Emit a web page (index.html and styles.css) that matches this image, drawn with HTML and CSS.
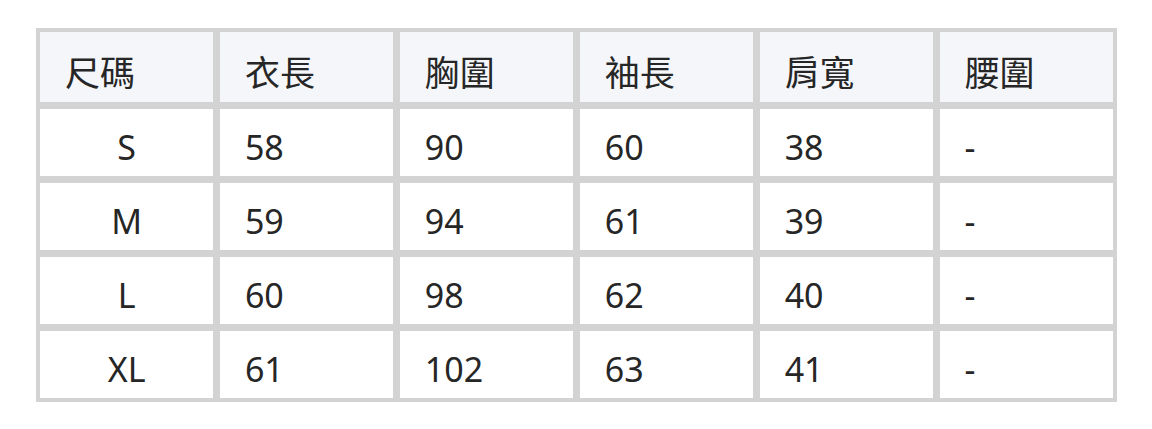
FILE: index.html
```html
<!DOCTYPE html>
<html lang="zh-Hant">
<head>
<meta charset="utf-8">
<title>尺碼表</title>
<link rel="stylesheet" href="styles.css">
</head>
<body>
<div class="size-table">
  <div class="cell head">尺碼</div>
  <div class="cell head">衣長</div>
  <div class="cell head">胸圍</div>
  <div class="cell head">袖長</div>
  <div class="cell head">肩寬</div>
  <div class="cell head">腰圍</div>

  <div class="cell size">S</div>
  <div class="cell">58</div>
  <div class="cell">90</div>
  <div class="cell">60</div>
  <div class="cell">38</div>
  <div class="cell">-</div>

  <div class="cell size">M</div>
  <div class="cell">59</div>
  <div class="cell">94</div>
  <div class="cell">61</div>
  <div class="cell">39</div>
  <div class="cell">-</div>

  <div class="cell size">L</div>
  <div class="cell">60</div>
  <div class="cell">98</div>
  <div class="cell">62</div>
  <div class="cell">40</div>
  <div class="cell">-</div>

  <div class="cell size">XL</div>
  <div class="cell">61</div>
  <div class="cell">102</div>
  <div class="cell">63</div>
  <div class="cell">41</div>
  <div class="cell">-</div>
</div>
</body>
</html>
```
FILE: styles.css
```css
html, body {
  margin: 0;
  padding: 0;
  background: #ffffff;
}

body {
  padding: 28px 0 0 36px;
  font-family: "Noto Sans", "Noto Sans CJK TC", sans-serif;
  color: #262626;
}

.size-table {
  width: 1081px;
  box-sizing: border-box;
  display: grid;
  grid-template-columns: repeat(6, 1fr);
  grid-template-rows: 70px repeat(4, 67px);
  column-gap: 6.5px;
  row-gap: 7px;
  padding: 4px;
  background: #d3d3d3;
}

.cell {
  background: #ffffff;
  font-size: 34px;
  line-height: 46px;
  padding: 15px 0 0 25px;
  white-space: nowrap;
}

.head {
  background: #f5f6fa;
  font-size: 35px;
  padding-top: 18px;
}

.size {
  padding-left: 0;
  text-align: center;
}
```
